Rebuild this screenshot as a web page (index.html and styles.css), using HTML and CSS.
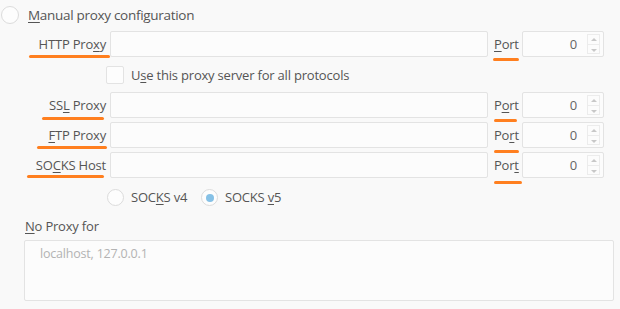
FILE: index.html
```html
<!DOCTYPE html>
<html>
<head>
<meta charset="utf-8">
<link rel="stylesheet" href="styles.css">
</head>
<body>
<div class="page">
  <div class="header">
    <span class="radio"></span>
    <span class="text"><u>M</u>anual proxy configuration</span>
  </div>

  <div class="grid">
    <label class="lbl mark m-http">HTTP Pro<u>x</u>y</label>
    <div class="field"></div>
    <label class="plbl mark m-p1"><u>P</u>ort</label>
    <div class="port"><span class="num">0</span><span class="spin"><span class="up"></span><span class="dn"></span></span></div>

    <div class="checkrow">
      <span class="check"></span>
      <span class="text">U<u>s</u>e this proxy server for all protocols</span>
    </div>

    <label class="lbl mark m-ssl">SS<u>L</u> Proxy</label>
    <div class="field"></div>
    <label class="plbl mark m-p2">P<u>o</u>rt</label>
    <div class="port"><span class="num">0</span><span class="spin"><span class="up"></span><span class="dn"></span></span></div>

    <label class="lbl mark m-ftp"><u>F</u>TP Proxy</label>
    <div class="field"></div>
    <label class="plbl mark m-p3">Po<u>r</u>t</label>
    <div class="port"><span class="num">0</span><span class="spin"><span class="up"></span><span class="dn"></span></span></div>

    <label class="lbl mark m-socks">SO<u>C</u>KS Host</label>
    <div class="field"></div>
    <label class="plbl mark m-p4">Por<u>t</u></label>
    <div class="port"><span class="num">0</span><span class="spin"><span class="up"></span><span class="dn"></span></span></div>

    <div class="radiorow">
      <span class="opt"><span class="radio small"></span><span class="text">SOC<u>K</u>S v4</span></span>
      <span class="opt"><span class="radio small on"></span><span class="text">SOCKS <u>v</u>5</span></span>
    </div>
  </div>

  <div class="noproxy">
    <div class="nplbl"><u>N</u>o Proxy for</div>
    <div class="area">localhost, 127.0.0.1</div>
  </div>
</div>
</body>
</html>
```

FILE: styles.css
```css
html, body {
  margin: 0;
  padding: 0;
  background: #f9f9f9;
}
body {
  font-family: "Open Sans", "DejaVu Sans", sans-serif;
  font-size: 13px;
  letter-spacing: -0.2px;
  color: #555555;
  width: 620px;
  height: 309px;
  overflow: hidden;
}
u {
  text-decoration: underline;
  text-underline-offset: 2px;
}
.page {
  display: flex;
  flex-direction: column;
}
.header {
  display: flex;
  align-items: center;
  height: 30px;
  gap: 9px;
  padding-left: 1px;
  font-size: 13.5px;
  letter-spacing: -0.3px;
}
.radio {
  width: 16px;
  height: 16px;
  border: 1px solid #dcdcdc;
  border-radius: 50%;
  background: #fdfdfd;
  box-sizing: content-box;
  position: relative;
  flex: none;
}
.radio.small {
  width: 15px;
  height: 15px;
}
.radio.on::after {
  content: "";
  position: absolute;
  left: 4px;
  top: 4px;
  width: 8px;
  height: 8px;
  border-radius: 50%;
  background: #86c1e6;
}
.grid {
  display: grid;
  grid-template-columns: 110px 378px 34px 82px;
  grid-template-rows: 26px 27px 26px 26px 26px 29px;
  row-gap: 4px;
  margin-top: 1px;
}
.lbl {
  justify-self: end;
  align-self: center;
  padding-right: 4px;
  white-space: nowrap;
  position: relative;
}
.plbl {
  align-self: center;
  padding-left: 6px;
  position: relative;
}
.field, .port, .area {
  background: #fcfcfc;
  border: 1px solid #e3e3e3;
  border-radius: 2px;
  box-sizing: border-box;
}
.port {
  display: flex;
  align-items: center;
  justify-content: flex-end;
  padding-right: 3px;
  color: #666;
}
.num {
  margin-right: 10px;
}
.spin {
  display: flex;
  flex-direction: column;
  width: 13px;
  height: 20px;
  border: 1px solid #ececec;
  box-sizing: border-box;
}
.up, .dn {
  flex: 1;
  position: relative;
}
.up {
  border-bottom: 1px solid #ececec;
}
.up::after, .dn::after {
  content: "";
  position: absolute;
  left: 3px;
  top: 3px;
  border-left: 3px solid transparent;
  border-right: 3px solid transparent;
}
.up::after {
  border-bottom: 3px solid #c8c8c8;
}
.dn::after {
  border-top: 3px solid #c8c8c8;
  top: 4px;
}
.checkrow {
  grid-column: 1 / 5;
  display: flex;
  align-items: center;
  padding-left: 106px;
  gap: 7px;
}
.check {
  width: 18px;
  height: 18px;
  border: 1px solid #e3e3e3;
  border-radius: 2px;
  background: #fdfdfd;
  box-sizing: border-box;
}
.radiorow {
  grid-column: 1 / 5;
  display: flex;
  align-items: center;
  padding-left: 107px;
  margin-top: 1px;
}
.opt {
  display: flex;
  align-items: center;
  gap: 7px;
  width: 94px;
}
.mark::after {
  content: "";
  position: absolute;
  height: 3px;
  border-radius: 2px;
  background: #ff7f1f;
}
.m-http::after { right: 0; width: 81px; bottom: -5px; }
.m-ssl::after { right: 6px; width: 62px; bottom: -6px; }
.m-ftp::after { right: 3px; width: 70px; bottom: -5px; }
.m-socks::after { right: 6px; width: 77px; bottom: -4px; }
.m-p1::after { left: 5px; width: 26px; bottom: -8px; }
.m-p2::after { left: 6px; width: 23px; bottom: -8px; }
.m-p3::after { left: 6px; width: 25px; bottom: -9px; }
.m-p4::after { left: 6px; width: 28px; bottom: -10px; }
.noproxy {
  padding-left: 24px;
  padding-right: 6px;
  margin-top: 6px;
}
.nplbl {
  padding-left: 1px;
  height: 23px;
  line-height: 18px;
}
.area {
  height: 61px;
  padding: 4px 10px 0 15px;
  color: #b3b3b3;
  font-size: 12.5px;
}
```
